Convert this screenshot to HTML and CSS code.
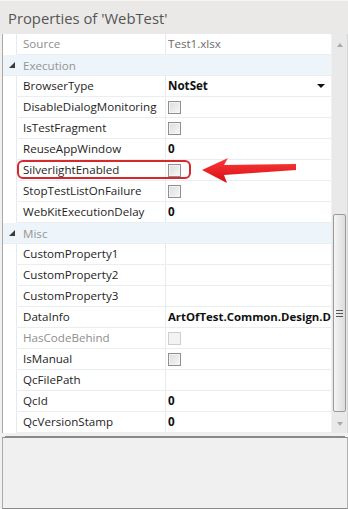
FILE: index.html
```html
<!DOCTYPE html>
<html lang="en">
<head>
<meta charset="UTF-8">
<title>Properties of 'WebTest'</title>
<link rel="stylesheet" href="styles.css">
</head>
<body>
<div class="panel">
  <div class="title">Properties of 'WebTest'</div>
  <div class="body">
    <div class="grid">
      <div class="row"><div class="gutter"></div><div class="name readonly">Source</div><div class="value plain">Test1.xlsx</div></div>
      <div class="cat"><svg class="tri" width="6" height="6" viewBox="0 0 6 6"><polygon points="6,0 6,6 0,6" fill="#3c3c3c"/></svg>Execution</div>
      <div class="row"><div class="gutter"></div><div class="name">BrowserType</div><div class="value">NotSet<span class="drop"></span></div></div>
      <div class="row"><div class="gutter"></div><div class="name">DisableDialogMonitoring</div><div class="value"><span class="check"></span></div></div>
      <div class="row"><div class="gutter"></div><div class="name">IsTestFragment</div><div class="value"><span class="check"></span></div></div>
      <div class="row"><div class="gutter"></div><div class="name">ReuseAppWindow</div><div class="value">0</div></div>
      <div class="row"><div class="gutter"></div><div class="name">SilverlightEnabled</div><div class="value"><span class="check"></span></div></div>
      <div class="row"><div class="gutter"></div><div class="name">StopTestListOnFailure</div><div class="value"><span class="check"></span></div></div>
      <div class="row"><div class="gutter"></div><div class="name">WebKitExecutionDelay</div><div class="value">0</div></div>
      <div class="cat"><svg class="tri" width="6" height="6" viewBox="0 0 6 6"><polygon points="6,0 6,6 0,6" fill="#3c3c3c"/></svg>Misc</div>
      <div class="row"><div class="gutter"></div><div class="name">CustomProperty1</div><div class="value"></div></div>
      <div class="row"><div class="gutter"></div><div class="name">CustomProperty2</div><div class="value"></div></div>
      <div class="row"><div class="gutter"></div><div class="name">CustomProperty3</div><div class="value"></div></div>
      <div class="row"><div class="gutter"></div><div class="name">DataInfo</div><div class="value"><span class="clip">ArtOfTest.Common.Design.D</span></div></div>
      <div class="row"><div class="gutter"></div><div class="name readonly">HasCodeBehind</div><div class="value"><span class="check off"></span></div></div>
      <div class="row"><div class="gutter"></div><div class="name">IsManual</div><div class="value"><span class="check"></span></div></div>
      <div class="row"><div class="gutter"></div><div class="name">QcFilePath</div><div class="value"></div></div>
      <div class="row"><div class="gutter"></div><div class="name">QcId</div><div class="value">0</div></div>
      <div class="row"><div class="gutter"></div><div class="name">QcVersionStamp</div><div class="value">0</div></div>
    </div>
    <div class="scroll">
      <span class="arrow up"></span>
      <div class="thumb"><span class="grip"></span></div>
      <span class="arrow down"></span>
    </div>
  </div>
  <div class="desc"></div>

  <div class="mark"></div>
  <svg class="pointer" width="100" height="30" viewBox="0 0 100 30">
    <defs>
      <linearGradient id="rd" x1="0" y1="0" x2="0" y2="1">
        <stop offset="0" stop-color="#ff3b3b"/>
        <stop offset="1" stop-color="#d40d12"/>
      </linearGradient>
    </defs>
    <polygon points="0,13 26,1 22,8 94,7 94,13 22,18 25,26" fill="url(#rd)"/>
  </svg>
</div>
</body>
</html>
```

FILE: styles.css
```css
* { margin: 0; padding: 0; box-sizing: border-box; }
body {
  width: 348px;
  height: 509px;
  overflow: hidden;
  background: #f0f0f0;
  font-family: "Open Sans", "Noto Sans", sans-serif;
  font-size: 11.6px;
}
.panel { position: relative; height: 509px; }
.title {
  height: 34px;
  padding: 5px 0 0 8px;
  background: #ebe9e7;
  border-top: 1px solid #f6f5f4;
  color: #555;
  font-size: 14.8px;
  line-height: 24px;
}
.body {
  display: flex;
  margin-left: 2px;
  border-left: 1px solid #a9a9a9;
  border-right: 1px solid #d6d6d6;
  height: 399px;
  background: #fff;
}
.grid { flex: 1; overflow: hidden; }
.row {
  display: flex;
  height: 21px;
  border-bottom: 1px solid #e9eef3;
  line-height: 20px;
  color: #1e1e1e;
}
.gutter {
  width: 14px;
  flex: none;
  border-right: 1px solid #e4eaf0;
  border-bottom: 1px solid #fff;
  margin-bottom: -1px;
}
.name {
  width: 149px;
  flex: none;
  padding-left: 6px;
  border-right: 1px solid #e4eaf0;
  white-space: nowrap;
}
.name.readonly { color: #8e8e8e; }
.value {
  flex: 1;
  display: flex;
  align-items: center;
  padding-left: 2px;
  font-weight: bold;
  white-space: nowrap;
  overflow: hidden;
  color: #111;
}
.value.plain { font-weight: normal; color: #6a6a6a; }
.clip { font-size: 11.4px; }
.drop {
  margin-left: auto;
  margin-right: 6px;
  border-left: 4px solid transparent;
  border-right: 4px solid transparent;
  border-top: 4px solid #111;
}
.check {
  width: 13px;
  height: 13px;
  border: 1px solid #8f8f8f;
  background: linear-gradient(135deg, #dcdcdc, #f7f7f7);
  box-shadow: inset 0 0 0 1px #f4f4f4;
}
.check.off {
  border-color: #cfcfcf;
  background: #f3f3f3;
  box-shadow: none;
}
.cat {
  display: flex;
  align-items: center;
  height: 21px;
  border-bottom: 1px solid #e9eef3;
  background: #edf4fa;
  color: #959595;
  padding-left: 6px;
}
.tri { margin-right: 8px; }
.scroll {
  width: 16px;
  flex: none;
  display: flex;
  flex-direction: column;
  align-items: center;
  background: #e9e9e9;
  border-left: 1px solid #f0f0f0;
}
.arrow {
  width: 0;
  height: 0;
  border-left: 3px solid transparent;
  border-right: 3px solid transparent;
}
.arrow.up { margin-top: 9px; border-bottom: 4px solid #a9a9a9; }
.arrow.down { margin-top: 10px; border-top: 4px solid #a9a9a9; }
.thumb {
  margin-top: 167px;
  width: 13px;
  height: 198px;
  border: 1px solid #9a9a9a;
  border-radius: 2px;
  background: linear-gradient(90deg, #f5f5f5, #dcdcdc);
  display: flex;
  align-items: center;
  justify-content: center;
}
.grip {
  width: 7px;
  height: 7px;
  border-top: 1px solid #555;
  border-bottom: 1px solid #555;
  background: linear-gradient(#555, #555) center / 7px 1px no-repeat;
}
.desc {
  margin: 4px 0 0 2px;
  height: 72px;
  border-top: 1px solid #8a8a8a;
  border-left: 1px solid #a9a9a9;
  border-right: 1px solid #b0b0b0;
  border-bottom: 1px solid #8a8a8a;
  background: #f0f0f0;
  box-shadow: 0 -4px 0 -3px #8a8a8a;
}
.mark {
  position: absolute;
  left: 17px;
  top: 160px;
  width: 174px;
  height: 19px;
  border: 2px solid #d7282e;
  border-radius: 6px;
}
.pointer {
  position: absolute;
  left: 202px;
  top: 157px;
}
```
